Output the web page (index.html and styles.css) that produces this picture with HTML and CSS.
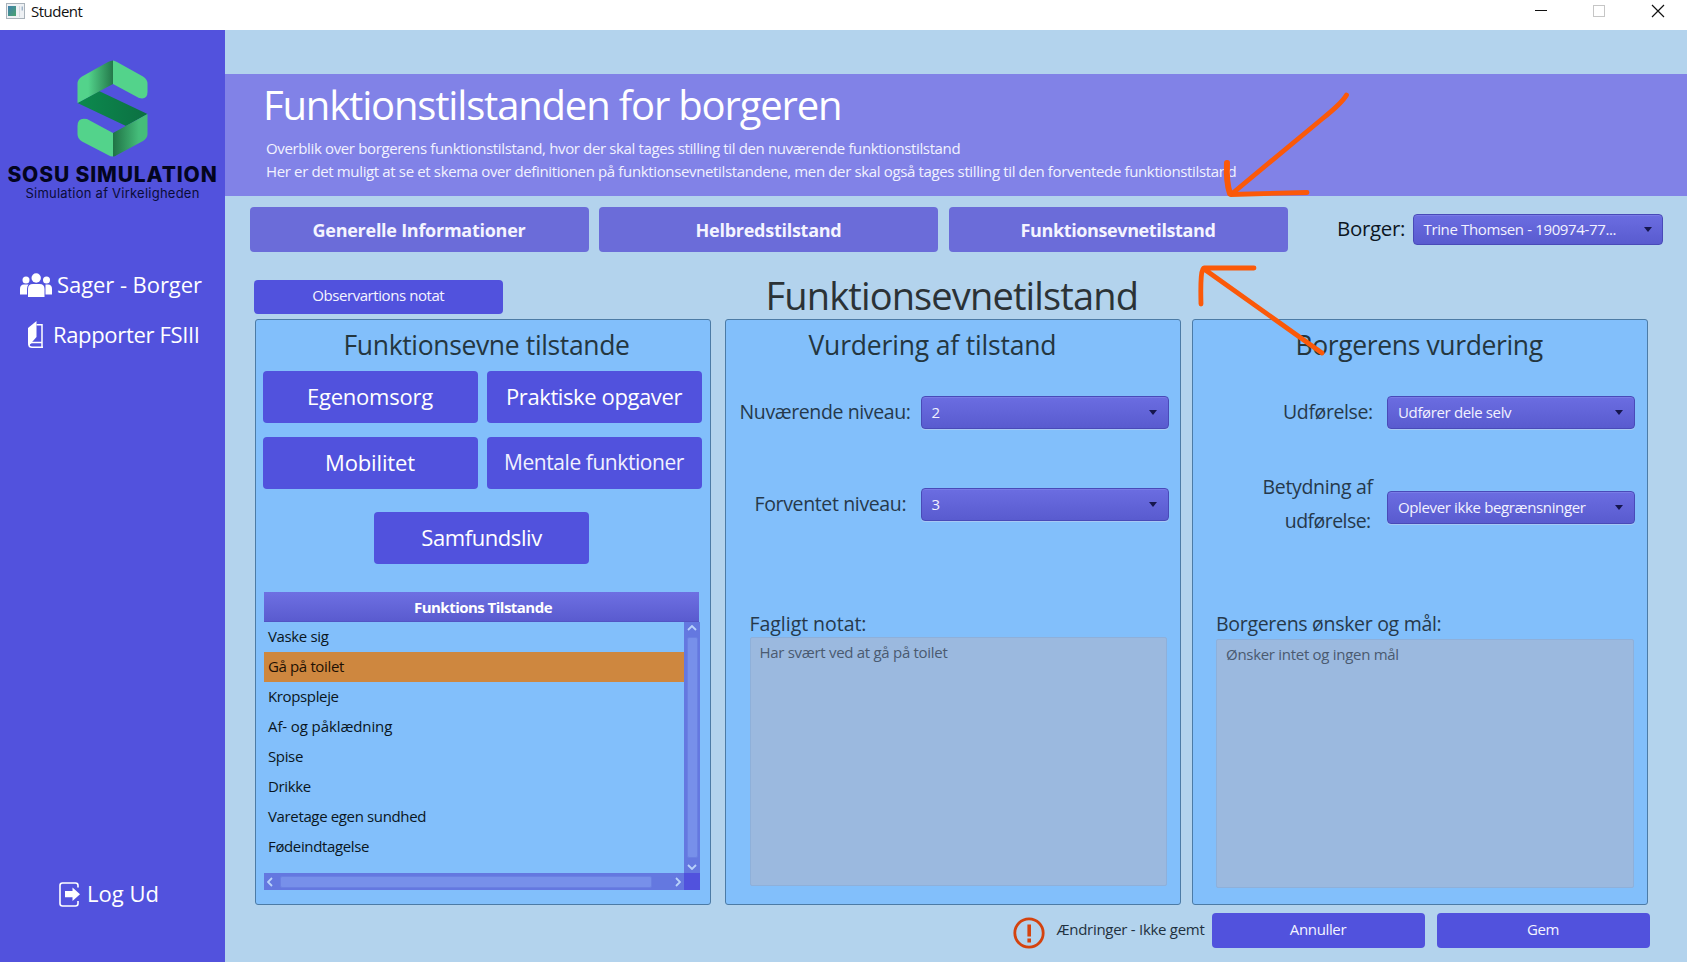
FILE: index.html
```html
<!DOCTYPE html>
<html lang="da">
<head>
<meta charset="utf-8">
<title>Student</title>
<link rel="stylesheet" href="styles.css">
</head>
<body>
<div class="window">
  <header class="titlebar">
    <svg class="app-icon" width="19" height="16" viewBox="0 0 19 16"><defs><linearGradient id="ai" x1="0" y1="0" x2="1" y2="1"><stop offset="0" stop-color="#3f7fae"/><stop offset="1" stop-color="#4aa36e"/></linearGradient></defs><rect x=".5" y=".5" width="18" height="15" fill="#eef1f4" stroke="#a9b2ba"/><rect x="2" y="3" width="8" height="10" fill="url(#ai)"/><path d="M13.5 3v11" stroke="#d4dae0"/><path d="M16.2 3.5v4" stroke="#7d99b5"/></svg>
    <span class="app-name">Student</span>
    <svg class="win-controls" width="140" height="22" viewBox="0 0 140 22" fill="none"><path d="M8 10.5h12" stroke="#111"/><rect x="66.500" y="5.500" width="11" height="11" stroke="#c6c6c6"/><path d="M125 5l12 12M137 5l-12 12" stroke="#111" stroke-width="1.200"/></svg>
  </header>
  <div class="body">
    <aside class="sidebar">
      <svg class="logo" width="71" height="97" viewBox="0 0 71 97">
        <defs>
          <linearGradient id="ga" x1="0" x2="1"><stop offset=".3" stop-color="#53d38b"/><stop offset="1" stop-color="#23784a"/></linearGradient>
          <linearGradient id="gb" x1="0" x2="1"><stop offset="0" stop-color="#1f7345"/><stop offset=".75" stop-color="#45bd7a"/></linearGradient>
          <linearGradient id="gc" x1="0" x2="1"><stop offset="0" stop-color="#0c8a4e"/><stop offset="1" stop-color="#0c7042"/></linearGradient>
        </defs>
        <path d="M.5 43 22 31 70.500 54 49 66z" fill="url(#gc)"/>
        <path d="M.5 43V24Q.5 19 5 16.500L31 2Q33.500.5 36 .5V24z" fill="url(#ga)"/>
        <path d="M36 .5Q37.500.5 40 2L66 16.500Q70.500 19 70.500 24V32Q70.500 40 62 38L36 24z" fill="#53d38b"/>
        <path d="M36 73 10 59Q.5 57 .5 66V74Q.5 79 5 81.500L31 95Q33.500 96.500 36 96.500z" fill="#53d38b"/>
        <path d="M70.500 54V74Q70.500 78 66 81L40 95Q38 96.500 36 96.500V73z" fill="url(#gb)"/>
      </svg>
      <div class="brand">SOSU SIMULATION</div>
      <div class="tagline">Simulation af Virkeligheden</div>
      <nav class="nav">
        <a class="nav-item sager"><svg width="32" height="24" viewBox="0 0 32 24" fill="#fff"><circle cx="16.200" cy="5" r="4.700"/><circle cx="6" cy="7" r="3.500"/><circle cx="26.500" cy="7" r="3.500"/><path d="M8 24v-8q0-5 5-5h6.500q5 0 5 5v8zM0 21.500V16q0-4.500 4-4.500h4.500Q7 13 7 16v5.500zM32 21.500V16q0-4.500-4-4.500h-2.500q0 1.500 0 4.500v5.500z"/></svg><span>Sager - Borger</span></a>
        <a class="nav-item rapporter"><svg width="16" height="27" viewBox="0 0 16 27" fill="none" stroke="#fff" stroke-width="1.500"><path d="M0 7 8.500 0v16L1 24.500Q0 24 0 22z" fill="#fff" stroke="none"/><path d="M8.500 3.700H14V21.500H4Q1 21.500 1 24 1 26.200 4 26.200H15M14 21v5"/></svg><span>Rapporter FSIII</span></a>
      </nav>
      <a class="nav-item logout"><svg width="22" height="25" viewBox="0 0 22 25" fill="none" stroke="#fff" stroke-width="1.600"><path d="M19 5.500V3.500Q19 1 16.500 1H3.500Q1 1 1 3.500v18Q1 24 3.500 24h13q2.500 0 2.500-2.500V19"/><path d="M6 9h7.500V5.500L21 12.200 13.500 19v-3.700H6z" fill="#fff" stroke="none"/></svg><span>Log Ud</span></a>
    </aside>
    <main class="main">
      <section class="hero">
        <h1>Funktionstilstanden for borgeren</h1>
        <p>Overblik over borgerens funktionstilstand, hvor der skal tages stilling til den nuværende funktionstilstand</p>
        <p>Her er det muligt at se et skema over definitionen på funktionsevnetilstandene, men der skal også tages stilling til den forventede funktionstilstand</p>
      </section>
      <div class="tabs">
        <button class="tab">Generelle Informationer</button>
        <button class="tab">Helbredstilstand</button>
        <button class="tab evne">Funktionsevnetilstand</button>
        <label class="borger">Borger:</label>
        <div class="combo combo-borger"><span>Trine Thomsen - 190974-77...</span><i class="caret"></i></div>
      </div>
      <div class="heading-row">
        <button class="btn note-btn">Observartions notat</button>
        <h2>Funktionsevnetilstand</h2>
      </div>
      <div class="panels">
        <section class="panel states">
          <h3>Funktionsevne tilstande</h3>
          <div class="state-grid">
            <button class="btn big egen">Egenomsorg</button>
            <button class="btn big prak">Praktiske opgaver</button>
            <button class="btn big mobi">Mobilitet</button>
            <button class="btn big ment">Mentale funktioner</button>
          </div>
          <button class="btn big samf">Samfundsliv</button>
          <div class="table">
            <div class="table-head">Funktions Tilstande</div>
            <div class="table-body">
              <ul class="rows">
                <li>Vaske sig</li><li class="selected">Gå på toilet</li><li>Kropspleje</li><li class="loose">Af- og påklædning</li><li>Spise</li><li>Drikke</li><li>Varetage egen sundhed</li><li>Fødeindtagelse</li>
              </ul>
              <div class="vbar"><svg width="10" height="6" viewBox="0 0 10 6"><path d="M1 5l4-4 4 4"/></svg><div class="thumb"></div><svg width="10" height="6" viewBox="0 0 10 6"><path d="M1 1l4 4 4-4"/></svg></div>
              <div class="hbar"><svg width="6" height="10" viewBox="0 0 6 10"><path d="M5 1 1 5l4 4"/></svg><div class="thumb"></div><svg width="6" height="10" viewBox="0 0 6 10"><path d="M1 1l4 4-4 4"/></svg></div>
              <div class="corner"></div>
            </div>
          </div>
        </section>
        <section class="panel assess">
          <h3>Vurdering af tilstand</h3>
          <div class="field first"><label class="nuv">Nuværende niveau:</label><div class="combo"><span>2</span><i class="caret"></i></div></div>
          <div class="field second"><label class="forv">Forventet niveau:</label><div class="combo"><span>3</span><i class="caret"></i></div></div>
          <label class="area-label fag">Fagligt notat:</label>
          <div class="area">Har svært ved at gå på toilet</div>
        </section>
        <section class="panel citizen">
          <h3>Borgerens vurdering</h3>
          <div class="field first"><label class="udf">Udførelse:</label><div class="combo"><span>Udfører dele selv</span><i class="caret"></i></div></div>
          <div class="field second"><label class="bet">Betydning af<br><span class="line2">udførelse:</span></label><div class="combo"><span>Oplever ikke begrænsninger</span><i class="caret"></i></div></div>
          <label class="area-label">Borgerens ønsker og mål:</label>
          <div class="area">Ønsker intet og ingen mål</div>
        </section>
      </div>
      <footer class="footer">
        <svg width="32" height="32" viewBox="0 0 32 32"><circle cx="16" cy="16" r="14.200" fill="none" stroke="#d4430f" stroke-width="2.800"/><path d="M14.400 7.500h3.600v12h-3.600zM14.400 21.500h3.600v4h-3.600z" fill="#d4430f"/></svg>
        <span class="status">Ændringer - Ikke gemt</span>
        <button class="btn foot">Annuller</button>
        <button class="btn foot">Gem</button>
      </footer>
    </main>
  </div>
  <svg class="marks" width="160" height="270" viewBox="1195 90 160 270" fill="none" stroke="#fb5909" stroke-width="4.800" stroke-linecap="round" stroke-linejoin="round"><path d="M1346.500 95Q1342 103 1322 119L1231 194.500L1307 192.500"/><path d="M1227 163Q1226 182 1230 193.500" stroke-width="6"/><path d="M1201 304Q1200 268 1204 268H1254M1204 269 1322 353"/></svg>
</div>
</body>
</html>
```
FILE: styles.css
```css
* { box-sizing: border-box; }
body { margin: 0; font: 15px/20px "Open Sans", "Noto Sans", sans-serif; letter-spacing: -0.36px; color: #0c1622; }
h1, h2, h3, p, ul { margin: 0; padding: 0; font-weight: 400; }
button { font: inherit; letter-spacing: inherit; border: 0; padding: 0; color: #f4f4ff; }
svg { flex: none; display: block; }
.window { position: relative; width: 1687px; height: 962px; overflow: hidden; display: flex; flex-direction: column; background: #b3d3ed; }

.titlebar { height: 30px; flex: none; background: #fff; display: flex; align-items: flex-start; padding: 0 20px 0 6px; }
.app-icon { margin: 3px 6px 0 0; }
.app-name { flex: 1; line-height: 22px; letter-spacing: -0.5px; color: #111; }

.body { flex: 1; display: flex; min-height: 0; }
.sidebar { width: 225px; flex: none; background: #5252dd; display: flex; flex-direction: column; align-items: flex-start; padding-top: 30px; color: #fff; }
.logo { margin-left: 77px; }
.brand { margin-top: 5px; align-self: center; font: 800 21px/26px Inter, sans-serif; letter-spacing: 0.85px; color: #03051f; white-space: nowrap; }
.tagline { margin-top: -3px; align-self: center; font: 13px/16px Inter, sans-serif; letter-spacing: 0.24px; color: #0a0c38; white-space: nowrap; }
.nav { margin-top: 58px; flex: 1; }
.nav-item { height: 50px; display: flex; align-items: center; font-size: 22px; line-height: 30px; white-space: nowrap; }
.sager { padding-left: 20px; gap: 5px; letter-spacing: -0.06px; }
.sager svg { margin-top: 2px; }
.rapporter { padding-left: 28px; gap: 9px; letter-spacing: -0.34px; }
.rapporter svg { margin-top: 1px; }
.logout { padding-left: 59px; gap: 6px; margin-bottom: 44px; letter-spacing: 0; }
.logout svg { margin-top: 2px; }

.main { flex: 1; min-width: 0; padding-top: 44px; display: flex; flex-direction: column; }
.hero { height: 122px; flex: none; padding-left: 41px; background: #8182e7; color: #fff; white-space: nowrap; }
.hero h1 { font-size: 40px; line-height: 60px; letter-spacing: -1.17px; margin: 0 0 3px -3px; padding-top: 1px; height: 60px; }
.hero p { line-height: 23px; color: #f2f2ff; }

.tabs { margin: 11px 0 0 24.500px; height: 45px; flex: none; display: flex; align-items: center; }
.tab { width: 339px; height: 45px; margin-right: 10.500px; border-radius: 4px; background: #6b6cd9; font-size: 18px; font-weight: 700; letter-spacing: -0.26px; padding-top: 1px; }
.tab.evne { letter-spacing: -0.38px; }
.borger { margin-left: 39px; width: 75.500px; font-size: 20.500px; line-height: 28px; letter-spacing: -0.34px; padding-bottom: 3px; }

.combo { width: 248px; height: 33px; padding: 0 11px 0 10px; display: flex; align-items: center; justify-content: space-between; border: 1px solid #494ab8; border-radius: 4px; background: linear-gradient(#6b6de1, #595bcf); box-shadow: 0 1px 0 #a7c9f5, inset 0 1px 0 #797be6; color: #f2f2ff; white-space: nowrap; }
.combo span { padding-bottom: 1px; }
.combo-borger { width: 250px; height: 31px; box-shadow: inset 0 1px 0 #797be6; }
.combo-borger { padding-right: 10px; }
.caret { width: 0; height: 0; border: 4.500px solid transparent; border-top: 5px solid #16164e; border-bottom: 0; }

.heading-row { height: 67px; flex: none; display: flex; padding-left: 29px; }
.btn { background: #5152dd; border-radius: 4px; white-space: nowrap; }
.note-btn { width: 248.500px; height: 34px; margin-top: 28px; padding-bottom: 4px; letter-spacing: -0.43px; }
.heading-row h2 { margin: 18px 0 0 263px; font-size: 38px; line-height: 50px; letter-spacing: -0.86px; color: #2b3236; }

.panels { display: flex; margin-left: 29.500px; height: 585.500px; flex: none; }
.panel { width: 456px; flex: none; border: 1px solid #4c7ba6; border-radius: 3px; background: #82bffb; padding-top: 7px; color: #26394b; display: flex; flex-direction: column; }
.assess { margin-left: 14px; }
.citizen { margin-left: 11.500px; }
.panel h3 { font-size: 26.500px; line-height: 36px; letter-spacing: -0.35px; color: #24363f; padding-left: 88px; white-space: nowrap; }
.assess h3 { padding-left: 83px; letter-spacing: -0.18px; }
.citizen h3 { padding-left: 102.500px; letter-spacing: -0.37px; }

.state-grid { display: grid; grid-template-columns: 215px 215px; grid-auto-rows: 52px; gap: 14px 9px; margin: 8px 0 23px 7px; }
.big { font-size: 22px; color: #fff; padding-bottom: 3px; }
.egen { letter-spacing: -0.23px; }
.prak { letter-spacing: -0.39px; }
.mobi { letter-spacing: -0.13px; padding-bottom: 2px; }
.ment { font-size: 21px; letter-spacing: -0.43px; padding-bottom: 3px; color: #f0f0ff; }
.samf { width: 215px; height: 52px; margin-left: 118.500px; padding-bottom: 2px; letter-spacing: -0.42px; }

.table { margin: 28px 0 0 8.500px; width: 436px; }
.table-head { height: 30px; width: 435px; line-height: 30px; text-align: center; padding-left: 3px; font-weight: 700; letter-spacing: -0.52px; color: #fff; background: linear-gradient(#6e70e2, #5a5bcf); border-bottom: 1px solid #5354c4; }
.table-body { display: grid; grid-template: 251px 17px / 1fr 16px; }
.rows { list-style: none; color: #0a1622; }
.rows li { height: 30px; line-height: 29px; padding-left: 4px; }
.rows .loose { letter-spacing: -0.1px; }
.rows .selected { background: #ce873f; color: #1e1003; }
.vbar, .hbar { display: flex; align-items: center; justify-content: space-between; background: #6478e0; }
.vbar { flex-direction: column; padding: 3px 0; }
.hbar { padding: 0 3px; }
.vbar svg, .hbar svg { fill: none; stroke: #b9d2fa; stroke-width: 1.800; }
.thumb { background: #7790ea; border: 1px solid #6a80e2; border-radius: 2px; }
.vbar .thumb { width: 11px; height: 221px; margin-bottom: 0; }
.hbar .thumb { width: 372px; height: 12px; margin-right: 17px; }
.corner { background: #5152dd; }

.field { display: flex; white-space: nowrap; }
.field label { flex: none; font-size: 19.500px; line-height: 33px; letter-spacing: -0.38px; margin-top: -1px; }
.field .combo { margin-left: auto; }
.assess .field { padding-right: 11px; }
.citizen .field { padding-right: 12px; }
.first { padding-top: 33px; box-sizing: content-box; height: 33px; }
.assess .second { margin-top: 60px; height: 93px; }
.assess .second label { margin-top: -2px; }
.assess .second .combo { margin-top: -1px; }
.assess .nuv { padding-left: 14px; }
.assess .forv { padding-left: 29px; letter-spacing: -0.36px; }
.citizen .udf { margin-left: 90px; letter-spacing: -0.38px; }
.citizen .second { margin-top: 42px; height: 111px; }
.citizen .bet { margin-left: 69.500px; line-height: 33.500px; text-align: right; letter-spacing: -0.33px; }
.citizen .line2 { padding-right: 2px; letter-spacing: -0.55px; }
.citizen .second .combo { margin-top: 20px; }
.area-label { font-size: 19.500px; line-height: 26px; letter-spacing: -0.3px; margin: 29px 0 0 23px; }
.area-label.fag { letter-spacing: -0.04px; margin-left: 24px; }
.area { margin: 0 0 0 24px; width: 417.500px; height: 249px; padding: 4px 0 0 9px; background: #9bb9df; border: 1px solid #8eb0da; border-radius: 2px; color: #4a5a70; letter-spacing: -0.29px; }
.citizen .area { margin: 2px 0 0 23px; }
.citizen .area-label { margin-top: 29px; }

.footer { display: flex; align-items: flex-start; padding: 8.500px 0 0 787.500px; color: #1f3140; }
.footer svg { margin-top: 4px; }
.status { margin: 6px 0 0 12px; width: 155px; white-space: nowrap; letter-spacing: -0.28px; }
.foot { width: 213px; height: 35px; margin-right: 12px; padding-bottom: 3px; }

.marks { position: absolute; left: 1195px; top: 90px; }
```
